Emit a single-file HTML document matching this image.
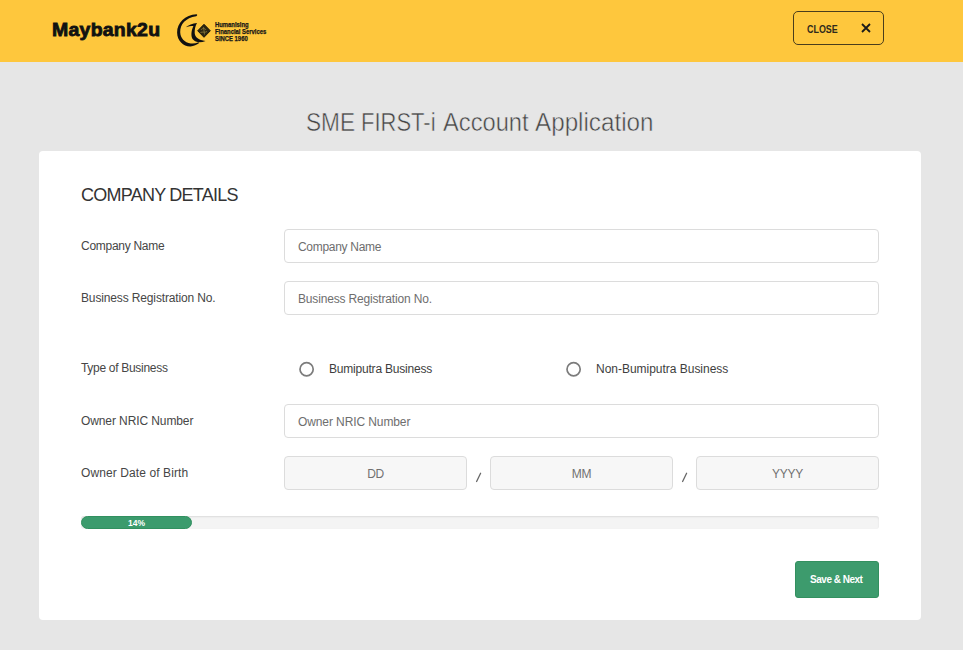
<!DOCTYPE html>
<html><head><meta charset="utf-8">
<style>
*{box-sizing:border-box;margin:0;padding:0}
html,body{width:963px;height:650px;overflow:hidden;background:#e6e6e6;font-family:"Liberation Sans",sans-serif}
.abs{position:absolute}
#hdr{position:absolute;left:0;top:0;width:963px;height:62px;background:#fec73d}
#logo{left:52px;top:19.8px;font-weight:bold;font-size:18px;color:#111;letter-spacing:0.25px;-webkit-text-stroke:0.8px #111;transform:scaleX(1.08);transform-origin:0 0}
#tag{left:214.5px;top:20.5px;font-size:7px;line-height:7.2px;color:#1a1a1a;font-weight:bold;transform:scaleX(0.84);transform-origin:0 0;white-space:nowrap;-webkit-text-stroke:0.25px #111}
#close{left:793px;top:11px;width:91px;height:34px;border:1px solid #4a3d1c;border-radius:5px}
#close .t{position:absolute;left:12.5px;top:10.8px;font-size:10.5px;font-weight:bold;color:#2f2a1c;transform:scaleX(0.85);transform-origin:0 0;white-space:nowrap}
#title span{position:absolute;top:108px;font-size:25px;color:#444;white-space:nowrap;-webkit-text-stroke:0.5px #e6e6e6;transform-origin:0 0}
#card{left:38.5px;top:150.8px;width:882.5px;height:469.2px;background:#fff;border-radius:4px}
.h2{left:81px;top:185px;font-size:18px;color:#333;letter-spacing:-0.75px;white-space:nowrap}
.lbl{position:absolute;left:81px;font-size:12px;color:#464646;letter-spacing:-0.3px}
.inp{position:absolute;height:34px;border:1px solid #dcdcdc;border-radius:4px;background:#fff}
.inp span{position:absolute;left:13px;top:10px;font-size:12px;color:#6e6e6e;letter-spacing:-0.3px}
.dob{background:#f7f7f7;text-align:center}
.dob span{position:static;display:block;line-height:34.5px;color:#717171}
.radio{position:absolute;width:15px;height:15px;border:1.8px solid #787878;border-radius:50%}
.rl{position:absolute;font-size:12px;color:#3e3e3e;letter-spacing:-0.2px}
.slash{position:absolute;font-size:12px;color:#666}
#prog{left:81px;top:515.5px;width:798px;height:13.5px;background:#f4f4f4;border-radius:3px;box-shadow:inset 0 1px 2px rgba(0,0,0,.1)}
#bar{left:81px;top:516px;width:111px;height:13px;background:#3b9b6d;border:1px solid #31905f;border-radius:7px;color:#fff;font-size:8.5px;font-weight:bold;text-align:center;line-height:12.5px}
#save{left:795px;top:561px;width:84px;height:37px;background:#3d9b6d;border-radius:3px;color:#fff;font-size:10px;font-weight:bold;text-align:center;line-height:35.5px;letter-spacing:-0.5px;border:1px solid #33905f;padding-right:1.5px}
</style></head><body>
<div id="hdr">
  <div id="logo" class="abs">Maybank2u</div>
  <svg class="abs" style="left:172px;top:10px" width="40" height="40" viewBox="0 0 40 40">
    <path d="M24.5 4.3 C13 5 5 13 5.1 22.5 C5.2 31 11.5 36.6 18.5 36.4 C21.8 36.3 24.8 35.1 27.2 33.1 L26.5 32.2 C24 33.3 21.5 33.7 18.8 33.4 C12.5 32.7 8.3 28 8.2 22 C8.1 14.5 13.5 7.6 24.2 6.2 C25.3 6 25.6 4.3 24.5 4.3 Z" fill="#111"/>
    <path d="M13.8 17.3 C16.5 14.9 20.5 13.5 25 13 C23.3 15.5 22.6 19.5 22.7 23 C22.9 27.3 26.8 30.4 33.5 30.9 C28.5 33.1 23.3 32.4 20.8 29.3 C18.8 26.6 19 21 21.4 16 C18.7 16 16.2 16.5 13.8 17.3 Z" fill="#111"/>
    <path d="M32 14.3 L38.3 20.8 L32 27.3 L25.7 20.8 Z" fill="#2b2612" stroke="#1a1608" stroke-width="1" stroke-linejoin="round"/>
    <path d="M29 20 C30 18 33 18 34 20 M28.5 22.5 C30.5 21.5 33 23 35 21.5 M31.5 17 L32.5 24.5" fill="none" stroke="#8a7a3a" stroke-width="0.8"/>
  </svg>
  <div id="tag" class="abs">Humanising<br>Financial Services<br>SINCE 1960</div>
  <div id="close" class="abs"><span class="t">CLOSE</span>
    <svg class="abs" style="left:67px;top:11px" width="10" height="10" viewBox="0 0 10 10"><path d="M1 1L9 9M9 1L1 9" stroke="#1a1a1a" stroke-width="1.8"/></svg>
  </div>
</div>
<div id="title"><span style="left:305.7px;transform:scaleX(0.906)">SME</span><span style="left:361.3px;transform:scaleX(0.880)">FIRST-i</span><span style="left:442.5px;transform:scaleX(0.947)">Account</span><span style="left:535.3px;transform:scaleX(0.969)">Application</span></div>
<div id="card" class="abs"></div>
<div class="h2 abs">COMPANY DETAILS</div>

<div class="lbl" style="top:238.5px;letter-spacing:-0.28px">Company Name</div>
<div class="inp" style="left:284px;top:229px;width:595px"><span>Company Name</span></div>

<div class="lbl" style="top:290.5px;letter-spacing:-0.14px">Business Registration No.</div>
<div class="inp" style="left:284px;top:281px;width:595px"><span style="letter-spacing:-0.17px">Business Registration No.</span></div>

<div class="lbl" style="top:360.5px;letter-spacing:-0.3px">Type of Business</div>
<svg class="abs" style="left:299px;top:361px" width="16" height="16"><circle cx="7.6" cy="8.3" r="6.6" fill="none" stroke="#7c7c7c" stroke-width="1.7"/></svg>
<div class="rl" style="left:329px;top:362px">Bumiputra Business</div>
<svg class="abs" style="left:566px;top:361px" width="16" height="16"><circle cx="7.6" cy="8.3" r="6.6" fill="none" stroke="#7c7c7c" stroke-width="1.7"/></svg>
<div class="rl" style="left:596px;top:362px;letter-spacing:-0.02px">Non-Bumiputra Business</div>

<div class="lbl" style="top:413.5px;letter-spacing:-0.1px">Owner NRIC Number</div>
<div class="inp" style="left:284px;top:404px;width:595px"><span style="letter-spacing:-0.1px">Owner NRIC Number</span></div>

<div class="lbl" style="top:465.5px;letter-spacing:0.1px">Owner Date of Birth</div>
<div class="inp dob" style="left:284px;top:455.5px;width:183px"><span>DD</span></div>
<svg class="abs" style="left:474px;top:470px" width="10" height="14"><path d="M6.6 3.3 L2.6 11.5" stroke="#666" stroke-width="1.3" stroke-linecap="round"/></svg>
<div class="inp dob" style="left:490px;top:455.5px;width:183px"><span>MM</span></div>
<svg class="abs" style="left:680px;top:470px" width="10" height="14"><path d="M6.6 3.3 L2.6 11.5" stroke="#666" stroke-width="1.3" stroke-linecap="round"/></svg>
<div class="inp dob" style="left:696px;top:455.5px;width:183px"><span>YYYY</span></div>

<div id="prog" class="abs"></div>
<div id="bar" class="abs">14%</div>
<div id="save" class="abs">Save &amp; Next</div>
</body></html>
